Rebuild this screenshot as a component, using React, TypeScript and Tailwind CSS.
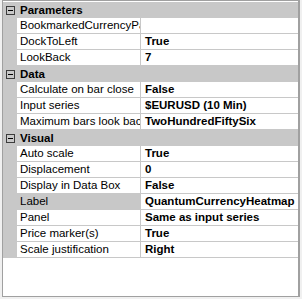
import React from "react";

type Prop = { name: string; value: string; selected?: boolean };
type Category = { title: string; props: Prop[] };

const categories: Category[] = [
  {
    title: "Parameters",
    props: [
      { name: "BookmarkedCurrencyPair", value: "" },
      { name: "DockToLeft", value: "True" },
      { name: "LookBack", value: "7" },
    ],
  },
  {
    title: "Data",
    props: [
      { name: "Calculate on bar close", value: "False" },
      { name: "Input series", value: "$EURUSD (10 Min)" },
      { name: "Maximum bars look back", value: "TwoHundredFiftySix" },
    ],
  },
  {
    title: "Visual",
    props: [
      { name: "Auto scale", value: "True" },
      { name: "Displacement", value: "0" },
      { name: "Display in Data Box", value: "False" },
      { name: "Label", value: "QuantumCurrencyHeatmap", selected: true },
      { name: "Panel", value: "Same as input series" },
      { name: "Price marker(s)", value: "True" },
      { name: "Scale justification", value: "Right" },
    ],
  },
];

function MinusBox() {
  return (
    <svg width="9" height="9" viewBox="0 0 9 9" className="block">
      <rect x="0.5" y="0.5" width="8" height="8" fill="none" stroke="#3c3c3c" />
      <path d="M2 4.5h5" stroke="#000" />
    </svg>
  );
}

function CategoryRow({ title }: { title: string }) {
  return (
    <div className="flex h-[16px] bg-[#c8c8c8]">
      <div className="w-[14px] flex items-center justify-center pl-[1px]">
        <MinusBox />
      </div>
      <div className="pl-[3px] font-bold leading-[16px] text-black">{title}</div>
    </div>
  );
}

function PropRow({ name, value, selected }: Prop) {
  return (
    <div className="flex h-[16px]">
      <div className="w-[14px] bg-[#c8c8c8]" />
      <div
        className={
          "w-[124px] border-r border-b border-[#c8c8c8] pl-[3px] leading-[15px] overflow-hidden whitespace-nowrap text-black " +
          (selected ? "bg-[#c8c8c8]" : "bg-white")
        }
      >
        {name}
      </div>
      <div className="flex-1 border-b border-[#c8c8c8] pl-[4px] font-bold leading-[15px] overflow-hidden whitespace-nowrap text-black">
        {value}
      </div>
    </div>
  );
}

export default function App() {
  return (
    <div
      className="w-[302px] h-[299px] bg-[#f0f0f0] text-[11.5px]"
      style={{ fontFamily: '"Liberation Sans", Arial, sans-serif' }}
    >
      <div className="ml-[2px] w-[298px] h-[297px] border border-[#a0a0a0] border-r-2 bg-white pt-[1px]">
        {categories.map((c) => (
          <div key={c.title}>
            <CategoryRow title={c.title} />
            {c.props.map((p) => (
              <PropRow key={p.name} {...p} />
            ))}
          </div>
        ))}
      </div>
    </div>
  );
}
